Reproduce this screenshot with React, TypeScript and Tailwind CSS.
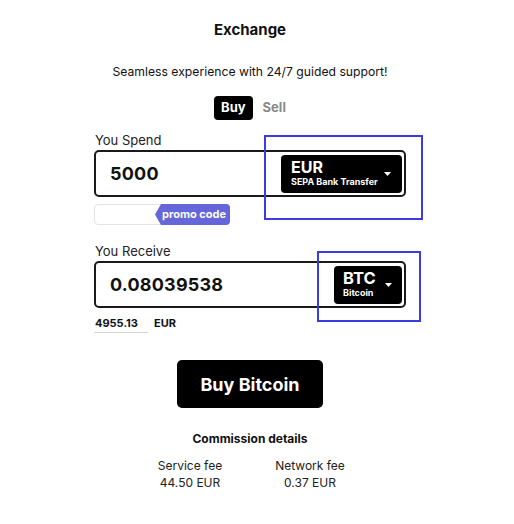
import { useState } from "react";

type Fee = { label: string; value: string };

const fees: Fee[] = [
    { label: "Service fee", value: "44.50 EUR" },
    { label: "Network fee", value: "0.37 EUR" },
];

function Caret() {
    return (
        <svg width="7" height="4" viewBox="0 0 7 4" className="shrink-0">
            <path d="M0 0 L7 0 L3.5 4 Z" fill="#fff" />
        </svg>
    );
}

export default function App() {
    const [mode, setMode] = useState<"buy" | "sell">("buy");

    return (
        <div className="w-[500px] min-h-[524px] bg-white flex flex-col items-center font-['Inter',sans-serif] text-[#111]">
            {/* HEADER */}
            <h1 className="mt-[20px] text-[15px] leading-[20px] font-bold">Exchange</h1>
            <p className="mt-[23px] text-[12.2px] leading-[18px]">Seamless experience with 24/7 guided support!</p>

            {/* TABS */}
            <div className="mt-[15px] flex items-center gap-[10px]">
                <button
                    onClick={() => setMode("buy")}
                    className={`h-[24px] px-[7px] rounded-[4px] text-[13px] font-bold ${mode === "buy" ? "bg-black text-white" : "text-[#8a8a8a]"}`}
                >
                    Buy
                </button>
                <button
                    onClick={() => setMode("sell")}
                    className={`h-[24px] rounded-[4px] text-[13px] font-bold ${mode === "sell" ? "bg-black text-white px-[7px]" : "text-[#8a8a8a]"}`}
                >
                    Sell
                </button>
            </div>

            {/* FORM */}
            <div className="w-[312px] mt-[12px] flex flex-col">
                <label className="pl-px text-[13px] leading-[16px] text-[#222]">You Spend</label>
                <div className="relative mt-[2px] h-[47px] border-2 border-[#1a1a1a] rounded-[5px] flex items-center justify-between pl-[14px] pr-[2px]">
                    <span className="text-[18px] font-bold tracking-[0.2px]">5000</span>
                    <div className="w-[121px] h-[38px] bg-black rounded-[4px] flex items-center justify-between pl-[10px] pr-[11px] text-white">
                        <div className="flex flex-col">
                            <span className="text-[16px] leading-[17px] font-bold">EUR</span>
                            <span className="text-[9px] leading-[12px] font-bold">SEPA Bank Transfer</span>
                        </div>
                        <Caret />
                    </div>
                    <div className="absolute left-[168px] top-[-17px] w-[159px] h-[85px] border-2 border-[#3b3ce0] pointer-events-none"></div>
                </div>

                <div className="relative mt-[7px] w-[136px] h-[21px] border border-[#e4e4e4] rounded-[4px]">
                    <div className="absolute right-[-1px] top-[-1px] bottom-[-1px] w-[75px] bg-[#6466d9] rounded-r-[4px] [clip-path:polygon(6px_0,100%_0,100%_100%,6px_100%,0_50%)] flex items-center justify-end pr-[4px]">
                        <span className="text-[11px] font-bold text-white">promo code</span>
                    </div>
                </div>

                <label className="mt-[18px] pl-px text-[13px] leading-[16px] text-[#222]">You Receive</label>
                <div className="relative mt-[2px] h-[47px] border-2 border-[#1a1a1a] rounded-[5px] flex items-center justify-between pl-[14px] pr-[2px]">
                    <span className="text-[18px] font-bold tracking-[0.2px]">0.08039538</span>
                    <div className="w-[68px] h-[38px] bg-black rounded-[4px] flex items-center justify-between pl-[9px] pr-[10px] text-white">
                        <div className="flex flex-col">
                            <span className="text-[16.5px] leading-[17px] font-bold">BTC</span>
                            <span className="text-[9px] leading-[12px] font-bold">Bitcoin</span>
                        </div>
                        <Caret />
                    </div>
                    <div className="absolute left-[221px] top-[-12px] w-[104px] h-[71px] border-2 border-[#3b3ce0] pointer-events-none"></div>
                </div>

                <div className="mt-[7px] flex items-start gap-[6px]">
                    <span className="w-[54px] pl-px border-b border-[#d4d4d4] text-[11px] leading-[16px] font-bold pb-[1px]">4955.13</span>
                    <span className="text-[11px] leading-[16px] font-bold">EUR</span>
                </div>
            </div>

            {/* ACTION */}
            <button className="mt-[27px] w-[146px] h-[48px] bg-black rounded-[5px] text-white text-[18px] font-bold">
                Buy Bitcoin
            </button>

            {/* COMMISSION */}
            <h3 className="mt-[22px] text-[12px] leading-[17px] font-bold">Commission details</h3>
            <div className="mt-[10px] grid grid-cols-2 w-[240px] text-[12px] leading-[17px] text-[#222]">
                {fees.map((fee) => (
                    <div key={fee.label} className="flex flex-col items-center">
                        <span>{fee.label}</span>
                        <span>{fee.value}</span>
                    </div>
                ))}
            </div>
        </div>
    );
}
